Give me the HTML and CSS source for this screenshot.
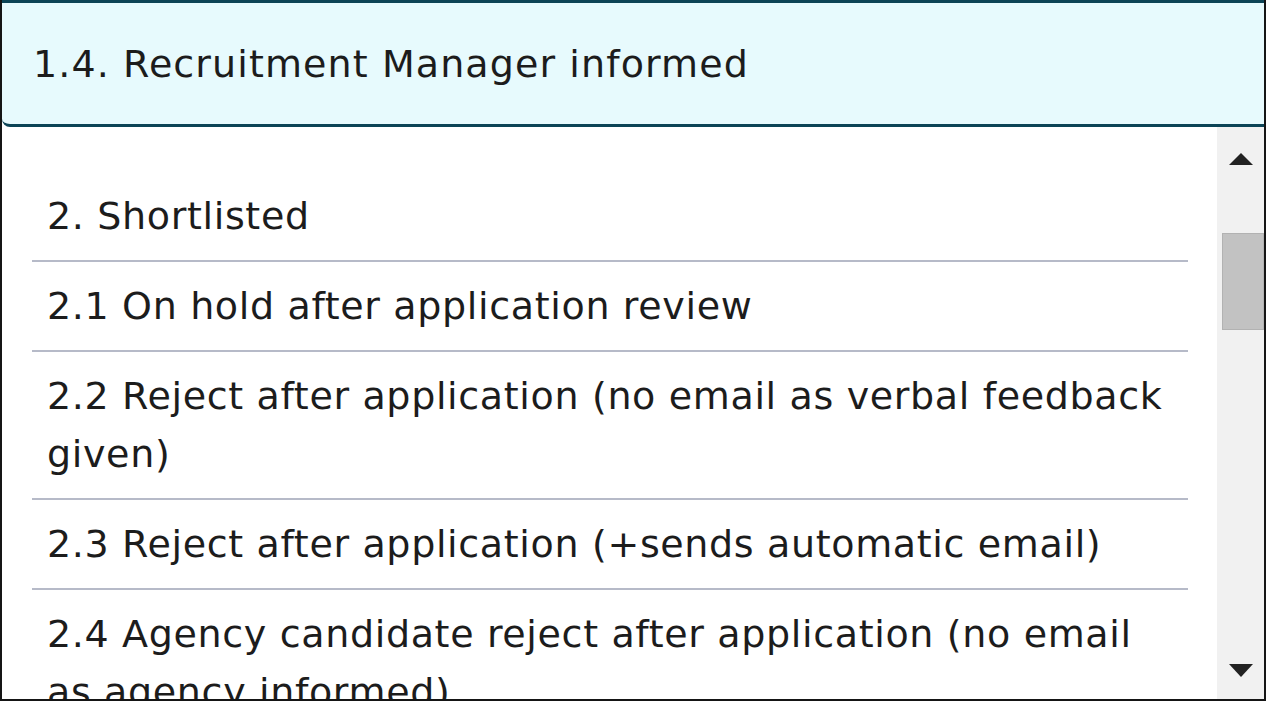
FILE: index.html
```html
<!DOCTYPE html>
<html lang="en">
<head>
    <meta charset="UTF-8">
    <meta name="viewport" content="width=device-width, initial-scale=1.0">
    <title>Status list</title>
    <link rel="stylesheet" href="styles.css">
</head>
<body>
    <div class="frame">
        <div class="selected">1.4. Recruitment Manager informed</div>

        <div class="dropdown">
            <ul class="options">
                <li>2. Shortlisted</li>
                <li>2.1 On hold after application review</li>
                <li>2.2 Reject after application (no email as verbal feedback given)</li>
                <li>2.3 Reject after application (+sends automatic email)</li>
                <li>2.4 Agency candidate reject after application (no email as agency informed)</li>
            </ul>
            <div class="scrollbar">
                <span class="arrow up"></span>
                <div class="track"><div class="thumb"></div></div>
                <span class="arrow down"></span>
            </div>
        </div>
    </div>
</body>
</html>
```

FILE: styles.css
```css
html, body {
    margin: 0;
    padding: 0;
    background: #fff;
}
.frame {
    width: 1266px;
    height: 701px;
    box-sizing: border-box;
    border: 2px solid #151515;
    border-top: none;
    display: flex;
    flex-direction: column;
    overflow: hidden;
    font-family: "DejaVu Sans", "Open Sans", sans-serif;
    color: #1c1c1c;
}
.selected {
    height: 127px;
    flex: none;
    box-sizing: border-box;
    padding: 0 0 0 31px;
    display: flex;
    align-items: center;
    font-size: 38px;
    letter-spacing: 1.1px;
    background: #e7fafd;
    border-top: 3px solid #0c4456;
    border-bottom: 3px solid #0c4456;
    border-radius: 0 0 0 8px;
}
.dropdown {
    flex: 1;
    display: flex;
    min-height: 0;
}
.options {
    flex: 1;
    list-style: none;
    margin: 0;
    padding: 45px 29px 0 30px;
    overflow: hidden;
}
.options li {
    font-size: 38px;
    letter-spacing: 0.65px;
    line-height: 58px;
    padding: 15px 15px;
    border-bottom: 2px solid #b6bac8;
}
.scrollbar {
    width: 47px;
    flex: none;
    background: #f1f1f1;
    display: flex;
    flex-direction: column;
    align-items: center;
}
.arrow {
    width: 0;
    height: 0;
    border-left: 12px solid transparent;
    border-right: 12px solid transparent;
}
.arrow.up {
    margin: 26px 0 14px;
    border-bottom: 12px solid #222;
}
.arrow.down {
    margin: 14px 0 22px;
    border-top: 13px solid #222;
}
.track {
    flex: 1;
    align-self: stretch;
    padding-left: 5px;
}
.thumb {
    margin-top: 54px;
    height: 95px;
    background: #c2c2c2;
    border: 1px solid #b2b2b2;
}
```
